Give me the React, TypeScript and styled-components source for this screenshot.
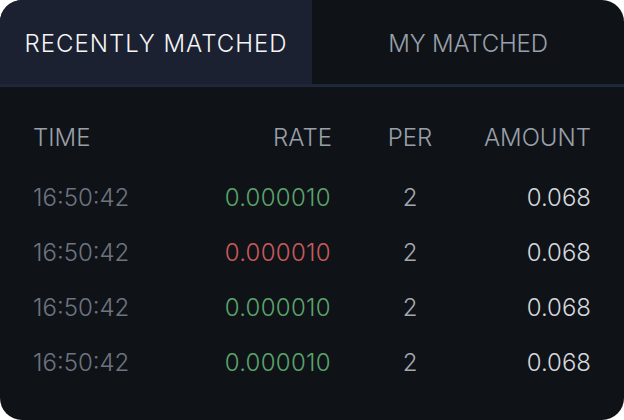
import React from "react";
import styled, { createGlobalStyle } from "styled-components";

const Global = createGlobalStyle`
  html, body { margin: 0; padding: 0; background: #ffffff; }
  body { font-family: Inter, "Noto Sans", sans-serif; }
`;

const Card = styled.div`
  width: 624px;
  height: 420px;
  background: #0f1318;
  border-radius: 22px;
  overflow: hidden;
  display: flex;
  flex-direction: column;
`;

const Tabs = styled.div`
  display: flex;
  height: 84px;
  border-bottom: 3px solid #1e2838;
`;

const Tab = styled.div<{ $active?: boolean }>`
  flex: 1;
  display: flex;
  align-items: center;
  justify-content: center;
  background: ${(p) => (p.$active ? "#1b2130" : "transparent")};
  color: ${(p) => (p.$active ? "#f4f5f7" : "#9aa0ab")};
  font-size: 24px;
  font-weight: 300;
  letter-spacing: ${(p) => (p.$active ? "1px" : "-0.2px")};
  padding-top: 2px;
`;

const Table = styled.div`
  display: grid;
  grid-template-columns: 137px 162px 148px 111px;
  grid-template-rows: 65px repeat(4, 55px);
  padding: 18px 33px 0;
  align-items: center;
`;

const Head = styled.div<{ $align: string; $shift?: boolean }>`
  color: #9aa0ab;
  font-size: 24px;
  font-weight: 300;
  text-align: ${(p) => p.$align};
  padding-left: ${(p) => (p.$shift ? "8px" : "0")};
  align-self: start;
  line-height: 65px;
  height: 65px;
  white-space: nowrap;
`;

const Cell = styled.div<{ $align: string; $color: string; $shift?: boolean }>`
  color: ${(p) => p.$color};
  font-size: 24px;
  font-weight: 300;
  text-align: ${(p) => p.$align};
  padding-left: ${(p) => (p.$shift ? "8px" : "0")};
  white-space: nowrap;
`;

const Rate = styled(Cell)`
  letter-spacing: 0.3px;
  padding-right: 1px;
`;

const rows = [
  { time: "16:50:42", rate: "0.000010", up: true, per: "2", amount: "0.068" },
  { time: "16:50:42", rate: "0.000010", up: false, per: "2", amount: "0.068" },
  { time: "16:50:42", rate: "0.000010", up: true, per: "2", amount: "0.068" },
  { time: "16:50:42", rate: "0.000010", up: true, per: "2", amount: "0.068" },
];

export default function App() {
  return (
    <>
      <Global />
      <Card>
        <Tabs>
          <Tab $active>RECENTLY MATCHED</Tab>
          <Tab>MY MATCHED</Tab>
        </Tabs>
        <Table>
          <Head $align="left">TIME</Head>
          <Head $align="right">RATE</Head>
          <Head $align="center" $shift>PER</Head>
          <Head $align="right">AMOUNT</Head>
          {rows.map((r, i) => (
            <React.Fragment key={i}>
              <Cell $align="left" $color="#6e7480">{r.time}</Cell>
              <Rate $align="right" $color={r.up ? "#5aa56a" : "#c95a5a"}>{r.rate}</Rate>
              <Cell $align="center" $color="#a3a8b2" $shift>{r.per}</Cell>
              <Cell $align="right" $color="#d5d8de">{r.amount}</Cell>
            </React.Fragment>
          ))}
        </Table>
      </Card>
    </>
  );
}
